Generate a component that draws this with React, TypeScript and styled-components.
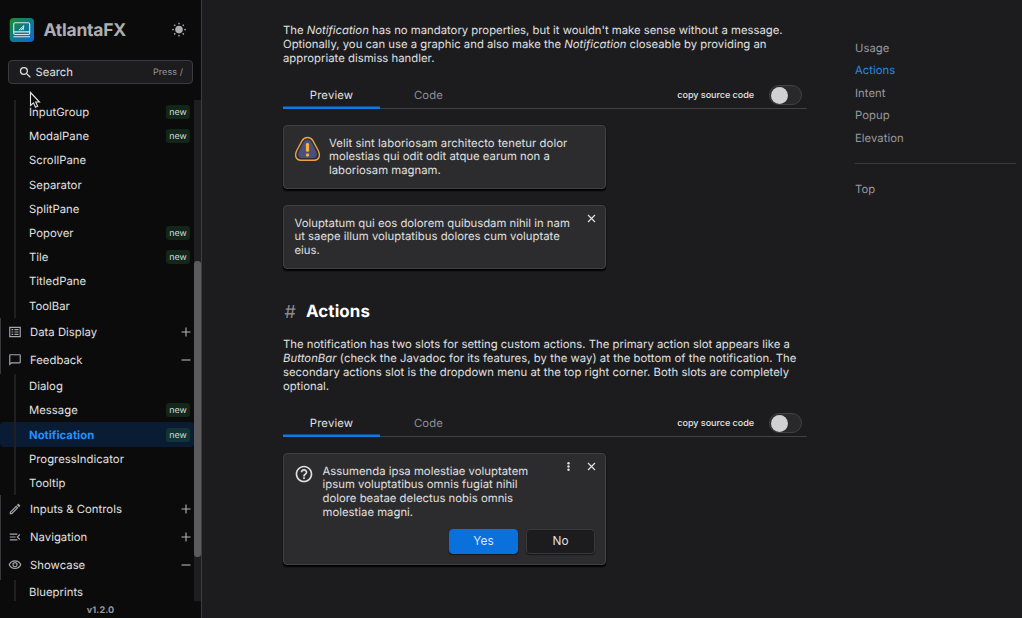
import React from 'react';
import styled, { createGlobalStyle, css } from 'styled-components';

const Global = createGlobalStyle`
  * { box-sizing: border-box; }
  body { margin: 0; background: #1c1c1e; overflow: hidden; font-family: Inter, "Liberation Sans", sans-serif; font-size: 11.3px; letter-spacing: 0.03px; color: #e0e0e1; text-rendering: geometricPrecision; }
  svg { display: block; flex: none; }
`;

const Window = styled.div`
  display: flex; width: 1022px; height: 618px; overflow: hidden;
`;

/* Sidebar */
const Sidebar = styled.aside`
  position: relative; flex: none; width: 202px; height: 618px; display: flex; flex-direction: column;
  background: #0b0b0c; border-right: 1px solid #3d3d40;
`;
const Brand = styled.header`
  display: flex; flex: none; align-items: center; height: 60px; padding: 0 14px 0 9px;
`;
const BrandName = styled.div`
  flex: 1; margin-left: 9.5px; font-size: 17.5px; font-weight: 700; letter-spacing: -0.25px; color: #aeaeb2;
`;
const SearchBox = styled.div`
  display: flex; align-items: center; flex: none; height: 24px; margin: 0 8px; padding: 0 9px 0 8.5px;
  background: #1c1c1e; border: 1px solid #3b3b3e; border-radius: 4px;
`;
const SearchLabel = styled.span`
  flex: 1; margin-left: 3px; letter-spacing: 0px;
`;
const Hint = styled.span`
  font-size: 9px; color: #98989d; letter-spacing: 0.08px;
`;
const Scroll = styled.div`
  display: flex; flex: none; height: 501px; margin-top: 16px; overflow: hidden;
`;
const Tree = styled.nav`
  width: 194px; flex: none;
`;
const Track = styled.div`
  width: 7px; padding-top: 161px; background: #1e1e20;
`;
const Thumb = styled.div`
  height: 296px; border-radius: 3px; background: #5b5b5e;
`;
const Leaf = styled.div<{ $active?: boolean }>`
  display: flex; align-items: center; height: 24.2px; padding: 0 4px 0 14px;
  ${p => p.$active && css`background: #091c33; border-radius: 4px; font-weight: 700; color: #2490ff;`}
`;
const Rail = styled.div`
  align-self: stretch; width: 2px; background: #202022; margin-right: 13px;
`;
const Grow = styled.span`
  flex: 1; white-space: nowrap;
`;
const NewBadge = styled.span<{ $active?: boolean }>`
  width: 24px; height: 14px; line-height: 15px; border-radius: 3px; text-align: center; font-size: 8.9px; font-weight: 400;
  color: #d4dad5; background: ${p => (p.$active ? '#103534' : '#12261a')};
`;
const Group = styled.div`
  display: flex; align-items: center; height: 28.2px; padding: 0 3px 0 6.5px; border-left: 1px solid #38383a;
`;
const GroupIcon = styled.span`
  width: 14px; margin-right: 8.5px; color: #a6a6aa;
`;
const Version = styled.footer`
  flex: none; height: 17px; text-align: center; line-height: 19px; font-size: 9.1px; font-weight: 700; letter-spacing: 0.1px; color: #98989d;
`;
const Pointer = styled.div`
  position: absolute; left: 29px; top: 91px;
`;

/* Page */
const Page = styled.main`
  width: 524px; margin-left: 81px; flex: none;
`;
const Paragraph = styled.div<{ $top: number }>`
  padding-top: ${p => p.$top}px;
`;
const Line = styled.div<{ $ls?: number }>`
  height: 14px; line-height: 14px; white-space: nowrap; letter-spacing: ${p => p.$ls ?? 0.02}px;
`;
const Tabs = styled.div`
  display: flex; align-items: stretch; height: 27px; margin-top: 17px; border-bottom: 1px solid #414144;
`;
const Tab = styled.div<{ $on?: boolean }>`
  width: 97px; height: 27px; line-height: 27px; text-align: center; letter-spacing: 0.15px; color: ${p => (p.$on ? '#e0e0e1' : '#8f8f93')};
  ${p => p.$on && css`box-shadow: inset 0 -2.5px #0a7aef;`}
`;
const CopyLabel = styled.span`
  margin-left: auto; line-height: 28px; font-size: 9.1px; letter-spacing: -0.07px; font-weight: 500;
`;
const Switch = styled.div`
  width: 33px; height: 20px; margin: 3px 5px 0 15px; padding: 1px; border-radius: 10px; border: 1px solid #414144; background: #29292b;
`;
const Knob = styled.div`
  width: 17px; height: 17px; margin-top: -0.5px; border-radius: 50%; background: #d1d1d3;
`;
const Card = styled.section<{ $h: number; $pad: string }>`
  width: 323px; height: ${p => p.$h}px; margin-top: 16px; padding: ${p => p.$pad};
  background: #2c2c2e; border: 1px solid #414144; border-radius: 4px; box-shadow: 0 1.5px 1.5px #000;
`;
const CardRow = styled.div`
  display: flex; align-items: flex-start;
`;
const CardText = styled.div`
  flex: 1; padding-top: 0.5px;
  ${Line} { height: 13.7px; line-height: 13.7px; }
`;
const CardIcon = styled.span<{ $gap: number }>`
  margin-right: ${p => p.$gap}px;
`;
const CardTools = styled.div`
  display: flex; gap: 14px; margin-top: -1.7px; color: #e0e0e1;
`;
const Heading = styled.h2`
  display: flex; align-items: center; height: 24px; margin: 31px 0 0; font-size: 16.9px; font-weight: 700; letter-spacing: 0.1px; color: #fff;
`;
const Hash = styled.span`
  width: 23px; padding-left: 1.5px; font-weight: 400; font-size: 18px; color: #8a8a8e;
`;
const Buttons = styled.div`
  display: flex; justify-content: flex-end; gap: 8px; margin: 9.7px 1px 0 0;
`;
const Button = styled.button<{ $primary?: boolean }>`
  width: 69px; height: 25px; padding: 0; border-radius: 4px; font: inherit; font-size: 11.8px; letter-spacing: 0.1px;
  color: ${p => (p.$primary ? '#d9e9fb' : '#e0e0e1')};
  background: ${p => (p.$primary ? '#0a70dc' : '#1c1c1e')};
  border: 1px solid ${p => (p.$primary ? '#0a70dc' : '#3a3a3c')};
  box-shadow: 0 1px 1px rgba(0, 0, 0, 0.5);
`;

/* Outline */
const Outline = styled.aside`
  width: 161px; margin-left: 48px; padding-top: 36.5px;
`;
const OutlineLink = styled.div<{ $on?: boolean }>`
  height: 22.5px; line-height: 22.5px; color: ${p => (p.$on ? '#2a86e0' : '#98989d')};
`;
const Divider = styled.hr`
  height: 1px; margin: 14px 0 13.5px; border: 0; background: #3a3a3c;
`;

const Logo = () => (
  <svg width="25" height="25" viewBox="0 0 25 25" fill="none">
    <defs>
      <linearGradient id="logo" x1="0" y1="0" x2="1" y2="1">
        <stop offset="0.1" stopColor="#1b8a3c" />
        <stop offset="0.5" stopColor="#0d7c8c" />
        <stop offset="1" stopColor="#0a66dc" />
      </linearGradient>
    </defs>
    <rect x="0.7" y="0" width="24.3" height="24" rx="4" fill="url(#logo)" />
    <rect x="4.7" y="4.8" width="16" height="11.7" rx="1.6" stroke="#d5e8ea" strokeWidth="1.1" />
    <path d="M5 13.9h15.6M4.5 18.8h16.5" stroke="#d5e8ea" strokeWidth="1.1" />
    <path d="M9.9 12.2l5-4.6-.9 4.6M11.7 12.2l2.3-2" stroke="#e5f1f2" strokeWidth="1" />
  </svg>
);

const Sun = () => (
  <svg width="16" height="16" viewBox="0 0 16 16" fill="#aeaeb2">
    <circle cx="8" cy="7.6" r="3.8" />
    {[0, 45, 90, 135, 180, 225, 270, 315].map(a => (
      <rect key={a} x="7.3" y="0.8" width="1.4" height="1.5" transform={`rotate(${a} 8 7.6)`} />
    ))}
  </svg>
);

const Close = () => (
  <svg width="9" height="9" viewBox="0 0 9 9" stroke="currentColor" strokeWidth="1.2"><path d="M1 1l7 7M8 1L1 8" /></svg>
);

const materialPaths = {
  search: 'M9.5 3A6.5 6.5 0 0 1 16 9.5c0 1.61-.59 3.09-1.56 4.23l.27.27h.79l5 5-1.5 1.5-5-5v-.79l-.27-.27A6.516 6.516 0 0 1 9.5 16 6.5 6.5 0 0 1 3 9.5 6.5 6.5 0 0 1 9.5 3m0 2C7 5 5 7 5 9.5S7 14 9.5 14 14 12 14 9.5 12 5 9.5 5z',
  table: 'M2 3v18h20V3H2zm18 16H4V5h16v14zM6 7h3v2H6V7zm5 0h7v2h-7V7zM6 11h3v2H6v-2zm5 0h7v2h-7v-2zM6 15h3v2H6v-2zm5 0h7v2h-7v-2z',
  chat: 'M20 2H4c-1.1 0-2 .9-2 2v18l4-4h14c1.1 0 2-.9 2-2V4c0-1.1-.9-2-2-2zm0 14H5.2L4 17.2V4h16v12z',
  pencil: 'M14.06 9.02l.92.92L5.92 19H5v-.92l9.06-9.06M17.66 3c-.25 0-.51.1-.7.29l-1.83 1.83 3.75 3.75 1.83-1.83c.39-.39.39-1.04 0-1.41l-2.34-2.34c-.2-.2-.45-.29-.71-.29zm-3.6 3.19L3 17.25V21h3.75L17.81 9.94l-3.75-3.75z',
  menu: 'M3 18h13v-2H3v2zm0-5h10v-2H3v2zm0-7v2h13V6H3zm18 9.59L17.42 12 21 8.41 19.59 7l-5 5 5 5L21 15.59z',
  eye: 'M12 6c3.79 0 7.17 2.13 8.82 5.5C19.17 14.87 15.79 17 12 17s-7.17-2.13-8.82-5.5C4.83 8.13 8.21 6 12 6m0-2C7 4 2.73 7.11 1 11.5 2.73 15.89 7 19 12 19s9.27-3.11 11-7.5C21.27 7.11 17 4 12 4zm0 5c1.38 0 2.5 1.12 2.5 2.5S13.38 14 12 14s-2.5-1.12-2.5-2.5S10.62 9 12 9m0-2c-2.48 0-4.5 2.02-4.5 4.5S9.52 16 12 16s4.5-2.02 4.5-4.5S14.48 7 12 7z',
  help: 'M11 18h2v-2h-2v2zm1-16C6.48 2 2 6.48 2 12s4.48 10 10 10 10-4.48 10-10S17.52 2 12 2zm0 18c-4.41 0-8-3.59-8-8s3.59-8 8-8 8 3.59 8 8-3.59 8-8 8zm0-14c-2.21 0-4 1.79-4 4h2c0-1.1.9-2 2-2s2 .9 2 2c0 2-3 1.75-3 5h2c0-2.25 3-2.5 3-5 0-2.21-1.79-4-4-4z',
};
const MaterialIcon = ({ name, size }: { name: keyof typeof materialPaths; size: number }) => (
  <svg width={size} height={size} viewBox="0 0 24 24" fill="currentColor"><path d={materialPaths[name]} /></svg>
);

const Warning = () => (
  <svg width="26" height="26" viewBox="0 0 26 26" fill="none">
    <path d="M12.5 1.5c2.6 0 4.3 1.2 5.5 3.3l5.2 9.7c2.500 5.100.9 9.700-3.800 9.700H5.600c-4.700 0-6.300-4.600-3.800-9.700L7 4.800c1.200-2.100 2.900-3.300 5.500-3.300z" fill="#2b2c40" stroke="#eda23b" strokeWidth="1.4" />
    <path d="M12.5 3.8c2.1 0 3.3 1.2 4.1 2.7l4.2 8.600c1.900 4 .7 6.900-2.600 6.900H6.800c-3.300 0-4.500-2.900-2.600-6.900l4.200-8.600c.8-1.500 2-2.700 4.100-2.700z" fill="#4b5078" />
    <rect x="10.9" y="7" width="3.2" height="8.8" rx="1.3" fill="#f6ae3e" />
    <circle cx="12.5" cy="19" r="1.7" fill="#f6ae3e" />
  </svg>
);

const Item = ({ name, fresh, active }: { name: string; fresh?: boolean; active?: boolean }) => (
  <Leaf $active={active}>
    <Rail />
    <Grow>{name}</Grow>
    {fresh && <NewBadge $active={active}>new</NewBadge>}
  </Leaf>
);

const Section = ({ name, icon, open }: { name: string; icon: keyof typeof materialPaths; open?: boolean }) => (
  <Group>
    <GroupIcon><MaterialIcon name={icon} size={14} /></GroupIcon>
    <Grow>{name}</Grow>
    <svg width="10" height="10" viewBox="0 0 10 10" stroke="#b4b4b8" strokeWidth="1.1"><path d={open ? 'M.5 5h9' : 'M.5 5h9M5 .5v9'} /></svg>
  </Group>
);

const PreviewTabs = () => (
  <Tabs>
    <Tab $on>Preview</Tab>
    <Tab>Code</Tab>
    <CopyLabel>copy source code</CopyLabel>
    <Switch><Knob /></Switch>
  </Tabs>
);

export default function App() {
  return (
    <Window>
      <Global />
      <Sidebar>
        <Brand><Logo /><BrandName>AtlantaFX</BrandName><Sun /></Brand>
        <SearchBox>
          <MaterialIcon name="search" size={15} />
          <SearchLabel>Search</SearchLabel>
          <Hint>Press /</Hint>
        </SearchBox>
        <Scroll>
          <Tree>
            <Item name="InputGroup" fresh />
            <Item name="ModalPane" fresh />
            <Item name="ScrollPane" />
            <Item name="Separator" />
            <Item name="SplitPane" />
            <Item name="Popover" fresh />
            <Item name="Tile" fresh />
            <Item name="TitledPane" />
            <Item name="ToolBar" />
            <Section name="Data Display" icon="table" />
            <Section name="Feedback" icon="chat" open />
            <Item name="Dialog" />
            <Item name="Message" fresh />
            <Item name="Notification" fresh active />
            <Item name="ProgressIndicator" />
            <Item name="Tooltip" />
            <Section name="Inputs & Controls" icon="pencil" />
            <Section name="Navigation" icon="menu" />
            <Section name="Showcase" icon="eye" open />
            <Item name="Blueprints" />
          </Tree>
          <Track><Thumb /></Track>
        </Scroll>
        <Version>v1.2.0</Version>
        <Pointer>
          <svg width="12" height="18" viewBox="0 0 12 18"><path d="M1.5 1.5v13l3-2.7 2 4.4 2.2-1-2-4.2h3.8z" fill="#0b0b0c" stroke="#e4e4e4" strokeWidth="1.1" /></svg>
        </Pointer>
      </Sidebar>
      <Page>
        <Paragraph $top={23}>
          <Line $ls={0.005}>The <i>Notification</i> has no mandatory properties, but it wouldn't make sense without a message.</Line>
          <Line $ls={0.01}>Optionally, you can use a graphic and also make the <i>Notification</i> closeable by providing an</Line>
          <Line>appropriate dismiss handler.</Line>
        </Paragraph>
        <PreviewTabs />
        <Card $h={64} $pad="10px 11px">
          <CardRow>
            <CardIcon $gap={8}><Warning /></CardIcon>
            <CardText>
              <Line $ls={0.06}>Velit sint laboriosam architecto tenetur dolor</Line>
              <Line>molestias qui odit odit atque earum non a</Line>
              <Line>laboriosam magnam.</Line>
            </CardText>
          </CardRow>
        </Card>
        <Card $h={64} $pad="10px 9px 10px 10.5px">
          <CardRow>
            <CardText>
              <Line $ls={0}>Voluptatum qui eos dolorem quibusdam nihil in nam</Line>
              <Line>ut saepe illum voluptatibus dolores cum voluptate</Line>
              <Line>eius.</Line>
            </CardText>
            <CardTools><Close /></CardTools>
          </CardRow>
        </Card>
        <Heading><Hash>#</Hash>Actions</Heading>
        <Paragraph $top={13}>
          <Line>The notification has two slots for setting custom actions. The primary action slot appears like a</Line>
          <Line $ls={0.05}><i>ButtonBar</i> (check the Javadoc for its features, by the way) at the bottom of the notification. The</Line>
          <Line $ls={0.03}>secondary actions slot is the dropdown menu at the top right corner. Both slots are completely</Line>
          <Line>optional.</Line>
        </Paragraph>
        <PreviewTabs />
        <Card $h={112} $pad="10px 9px 10px 10px">
          <CardRow>
            <CardIcon $gap={8.5}><MaterialIcon name="help" size={20} /></CardIcon>
            <CardText>
              <Line>Assumenda ipsa molestiae voluptatem</Line>
              <Line>ipsum voluptatibus omnis fugiat nihil</Line>
              <Line>dolore beatae delectus nobis omnis</Line>
              <Line>molestiae magni.</Line>
            </CardText>
            <CardTools>
              <svg width="9" height="9" viewBox="0 0 9 9" fill="currentColor"><circle cx="4.5" cy="1.2" r="1.2" /><circle cx="4.5" cy="4.5" r="1.2" /><circle cx="4.5" cy="7.8" r="1.2" /></svg>
              <Close />
            </CardTools>
          </CardRow>
          <Buttons><Button $primary>Yes</Button><Button>No</Button></Buttons>
        </Card>
      </Page>
      <Outline>
        <OutlineLink>Usage</OutlineLink>
        <OutlineLink $on>Actions</OutlineLink>
        <OutlineLink>Intent</OutlineLink>
        <OutlineLink>Popup</OutlineLink>
        <OutlineLink>Elevation</OutlineLink>
        <Divider />
        <OutlineLink>Top</OutlineLink>
      </Outline>
    </Window>
  );
}
